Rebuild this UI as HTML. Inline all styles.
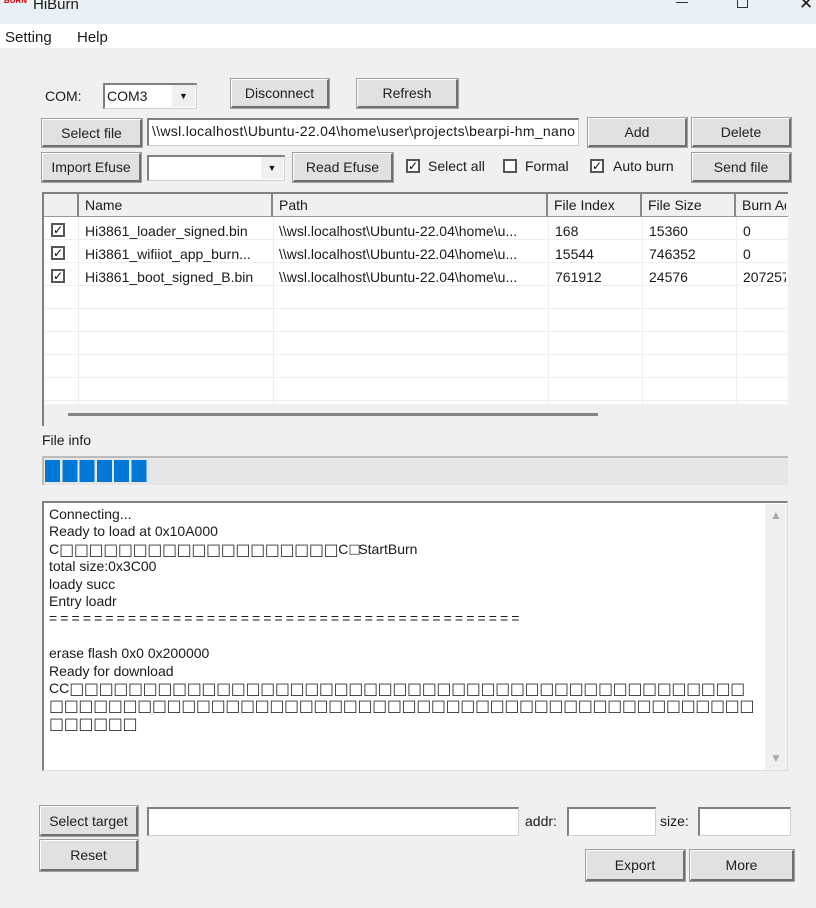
<!DOCTYPE html>
<html><head><meta charset="utf-8">
<style>
*{box-sizing:border-box;margin:0;padding:0}
body{width:816px;height:908px;background:#f0f0f0;font-family:"Liberation Sans","DejaVu Sans",sans-serif;font-size:14px;color:#1a1a1a;position:relative;overflow:hidden}
.a{position:absolute}
.btn{position:absolute;background:#e1e1e1;border:1px solid #fff;border-right:2px solid #707070;border-bottom:2px solid #707070;outline:1px solid #a0a0a0;text-align:center;font-size:14px;display:flex;align-items:center;justify-content:center;color:#222}
.inp{position:absolute;background:#fff;border:1px solid #cfcfcf;border-top:2px solid #808080;border-left:2px solid #808080}
.cb{position:absolute;width:14px;height:14px;border:2px solid #555;background:#fff;font-size:12px;line-height:10px;text-align:center;font-weight:bold;color:#000}
.b{display:inline-block;width:14.7px;text-align:center;font-family:"DejaVu Sans",sans-serif;font-size:16px;line-height:17px;vertical-align:top;color:#333}
.log div{height:17.4px;line-height:17.4px;white-space:nowrap}
</style></head><body>
<div class="a" style="left:0;top:0;width:816px;height:24px;background:#e9f1f6"></div>
<div class="a" style="left:4px;top:-4px;color:#d00;font-size:8px;font-style:italic;font-weight:bold">BURN</div>
<div class="a" style="left:33px;top:-4px;font-size:15px">HiBurn</div>
<div class="a" style="left:676px;top:2px;width:12px;height:1px;background:#333"></div>
<div class="a" style="left:737px;top:-4px;width:11px;height:12px;border:1px solid #333"></div>
<div class="a" style="left:799px;top:-6px;font-size:17px">✕</div>
<div class="a" style="left:0;top:24px;width:816px;height:24px;background:#fff"></div>
<div class="a" style="left:5px;top:29px;font-size:15px">Setting</div>
<div class="a" style="left:77px;top:29px;font-size:15px">Help</div>

<div class="a" style="left:45px;top:88px">COM:</div>
<div class="inp" style="left:103px;top:83px;width:94px;height:26px"></div>
<div class="a" style="left:107px;top:88px">COM3</div>
<div class="a" style="left:172px;top:85px;width:23px;height:22px;background:#f0f0f0;font-size:9px;text-align:center;line-height:22px">▼</div>
<div class="btn" style="left:231px;top:79px;width:98px;height:29px">Disconnect</div>
<div class="btn" style="left:357px;top:79px;width:101px;height:29px">Refresh</div>

<div class="btn" style="left:42px;top:119px;width:100px;height:28px">Select file</div>
<div class="inp" style="left:147px;top:118px;width:432px;height:28px"></div>
<div class="a" style="left:152px;top:123px;width:424px;overflow:hidden;white-space:nowrap;font-size:14px;letter-spacing:0.3px">\\wsl.localhost\Ubuntu-22.04\home\user\projects\bearpi-hm_nano</div>
<div class="btn" style="left:588px;top:118px;width:99px;height:29px">Add</div>
<div class="btn" style="left:692px;top:118px;width:99px;height:29px">Delete</div>

<div class="btn" style="left:42px;top:153px;width:99px;height:29px">Import Efuse</div>
<div class="inp" style="left:147px;top:155px;width:138px;height:26px"></div>
<div class="a" style="left:261px;top:157px;width:22px;height:22px;background:#f0f0f0;font-size:9px;text-align:center;line-height:22px">▼</div>
<div class="btn" style="left:293px;top:153px;width:100px;height:29px">Read Efuse</div>
<div class="cb" style="left:406px;top:159px">✓</div>
<div class="a" style="left:428px;top:158px">Select all</div>
<div class="cb" style="left:503px;top:159px"></div>
<div class="a" style="left:525px;top:158px">Formal</div>
<div class="cb" style="left:590px;top:159px">✓</div>
<div class="a" style="left:613px;top:158px">Auto burn</div>
<div class="btn" style="left:692px;top:153px;width:99px;height:29px">Send file</div>

<!-- table -->
<div class="a" style="left:42px;top:192px;width:746px;height:234px;background:#fff;border-left:2px solid #808080;border-top:2px solid #808080"></div>
<div class="a" style="left:44px;top:194px;width:744px;height:23px;background:#f0f0f0;border-bottom:1px solid #999"></div>
<div class="a" style="left:44px;top:217px;width:744px;height:187px;background:
repeating-linear-gradient(to bottom,transparent 0 22px,#eee 22px 23px)"></div>
<div class="a" style="left:77px;top:194px;width:2px;height:23px;background:#888"></div>
<div class="a" style="left:271px;top:194px;width:2px;height:23px;background:#888"></div>
<div class="a" style="left:546px;top:194px;width:2px;height:23px;background:#888"></div>
<div class="a" style="left:640px;top:194px;width:2px;height:23px;background:#888"></div>
<div class="a" style="left:734px;top:194px;width:2px;height:23px;background:#888"></div>
<div class="a" style="left:78px;top:217px;width:1px;height:187px;background:#eee"></div>
<div class="a" style="left:273px;top:217px;width:1px;height:187px;background:#eee"></div>
<div class="a" style="left:548px;top:217px;width:1px;height:187px;background:#eee"></div>
<div class="a" style="left:642px;top:217px;width:1px;height:187px;background:#eee"></div>
<div class="a" style="left:736px;top:217px;width:1px;height:187px;background:#eee"></div>
<div class="a" style="left:85px;top:197px">Name</div>
<div class="a" style="left:279px;top:197px">Path</div>
<div class="a" style="left:554px;top:197px">File Index</div>
<div class="a" style="left:648px;top:197px">File Size</div>
<div class="a" style="left:742px;top:197px;width:44px;overflow:hidden;white-space:nowrap">Burn Addr</div>
<div class="cb" style="left:51px;top:223px">✓</div>
<div class="cb" style="left:51px;top:246px">✓</div>
<div class="cb" style="left:51px;top:269px">✓</div>
<div class="a" style="left:85px;top:223px">Hi3861_loader_signed.bin</div>
<div class="a" style="left:85px;top:246px">Hi3861_wifiiot_app_burn...</div>
<div class="a" style="left:85px;top:269px">Hi3861_boot_signed_B.bin</div>
<div class="a" style="left:279px;top:223px">\\wsl.localhost\Ubuntu-22.04\home\u...</div>
<div class="a" style="left:279px;top:246px">\\wsl.localhost\Ubuntu-22.04\home\u...</div>
<div class="a" style="left:279px;top:269px">\\wsl.localhost\Ubuntu-22.04\home\u...</div>
<div class="a" style="left:555px;top:223px">168</div>
<div class="a" style="left:555px;top:246px">15544</div>
<div class="a" style="left:555px;top:269px">761912</div>
<div class="a" style="left:649px;top:223px">15360</div>
<div class="a" style="left:649px;top:246px">746352</div>
<div class="a" style="left:649px;top:269px">24576</div>
<div class="a" style="left:743px;top:223px">0</div>
<div class="a" style="left:743px;top:246px">0</div>
<div class="a" style="left:743px;top:269px;width:43px;overflow:hidden">2072576</div>
<div class="a" style="left:44px;top:404px;width:744px;height:22px;background:#f0f0f0"></div>
<div class="a" style="left:68px;top:413px;width:530px;height:3px;background:#858585"></div>

<div class="a" style="left:42px;top:432px">File info</div>
<div class="a" style="left:42px;top:456px;width:746px;height:29px;background:#e6e6e6;border-top:2px solid #bcbcbc;border-left:2px solid #bcbcbc"></div>
<div class="a" style="left:45px;top:460px;width:102px;height:22px;background:repeating-linear-gradient(to right,#0078d7 0 15px,#e6e6e6 15px 17.3px)"></div>

<!-- log -->
<div class="a" style="left:42px;top:501px;width:746px;height:270px;background:#fff;border-top:2px solid #808080;border-left:2px solid #808080;border-right:1px solid #ddd;border-bottom:1px solid #ddd"></div>
<div class="a" style="left:765px;top:504px;width:22px;height:266px;background:#f0f0f0"></div>
<div class="a" style="left:770px;top:508px;color:#aaa;font-size:12px">▲</div>
<div class="a" style="left:770px;top:751px;color:#aaa;font-size:12px">▼</div>
<div class="a log" style="left:49px;top:506px">
<div>Connecting...</div>
<div>Ready to load at 0x10A000</div>
<div id="l0">C</div>
<div>total size:0x3C00</div>
<div>loady succ</div>
<div>Entry loadr</div>
<div style="letter-spacing:3.1px">==========================================</div>
<div></div>
<div>erase flash 0x0 0x200000</div>
<div>Ready for download</div>
<div id="l1">CC</div>
<div id="l2"></div>
<div id="l3"></div>
</div>
<script>
function bx(n){var s='';for(var i=0;i<n;i++)s+='<span class="b">□</span>';return s;}
document.getElementById('l0').innerHTML+=bx(19)+'C<span class="b" style="width:10px;font-size:13px">□</span>StartBurn';
document.getElementById('l1').innerHTML+=bx(46);
document.getElementById('l2').innerHTML=bx(48);
document.getElementById('l3').innerHTML=bx(6);
</script>

<!-- bottom -->
<div class="btn" style="left:40px;top:806px;width:98px;height:30px">Select target</div>
<div class="inp" style="left:147px;top:807px;width:372px;height:29px"></div>
<div class="a" style="left:525px;top:813px">addr:</div>
<div class="inp" style="left:567px;top:807px;width:89px;height:29px"></div>
<div class="a" style="left:660px;top:813px">size:</div>
<div class="inp" style="left:698px;top:807px;width:93px;height:29px"></div>
<div class="btn" style="left:40px;top:840px;width:98px;height:31px">Reset</div>
<div class="btn" style="left:586px;top:850px;width:99px;height:31px">Export</div>
<div class="btn" style="left:690px;top:850px;width:104px;height:31px">More</div>
</body></html>
